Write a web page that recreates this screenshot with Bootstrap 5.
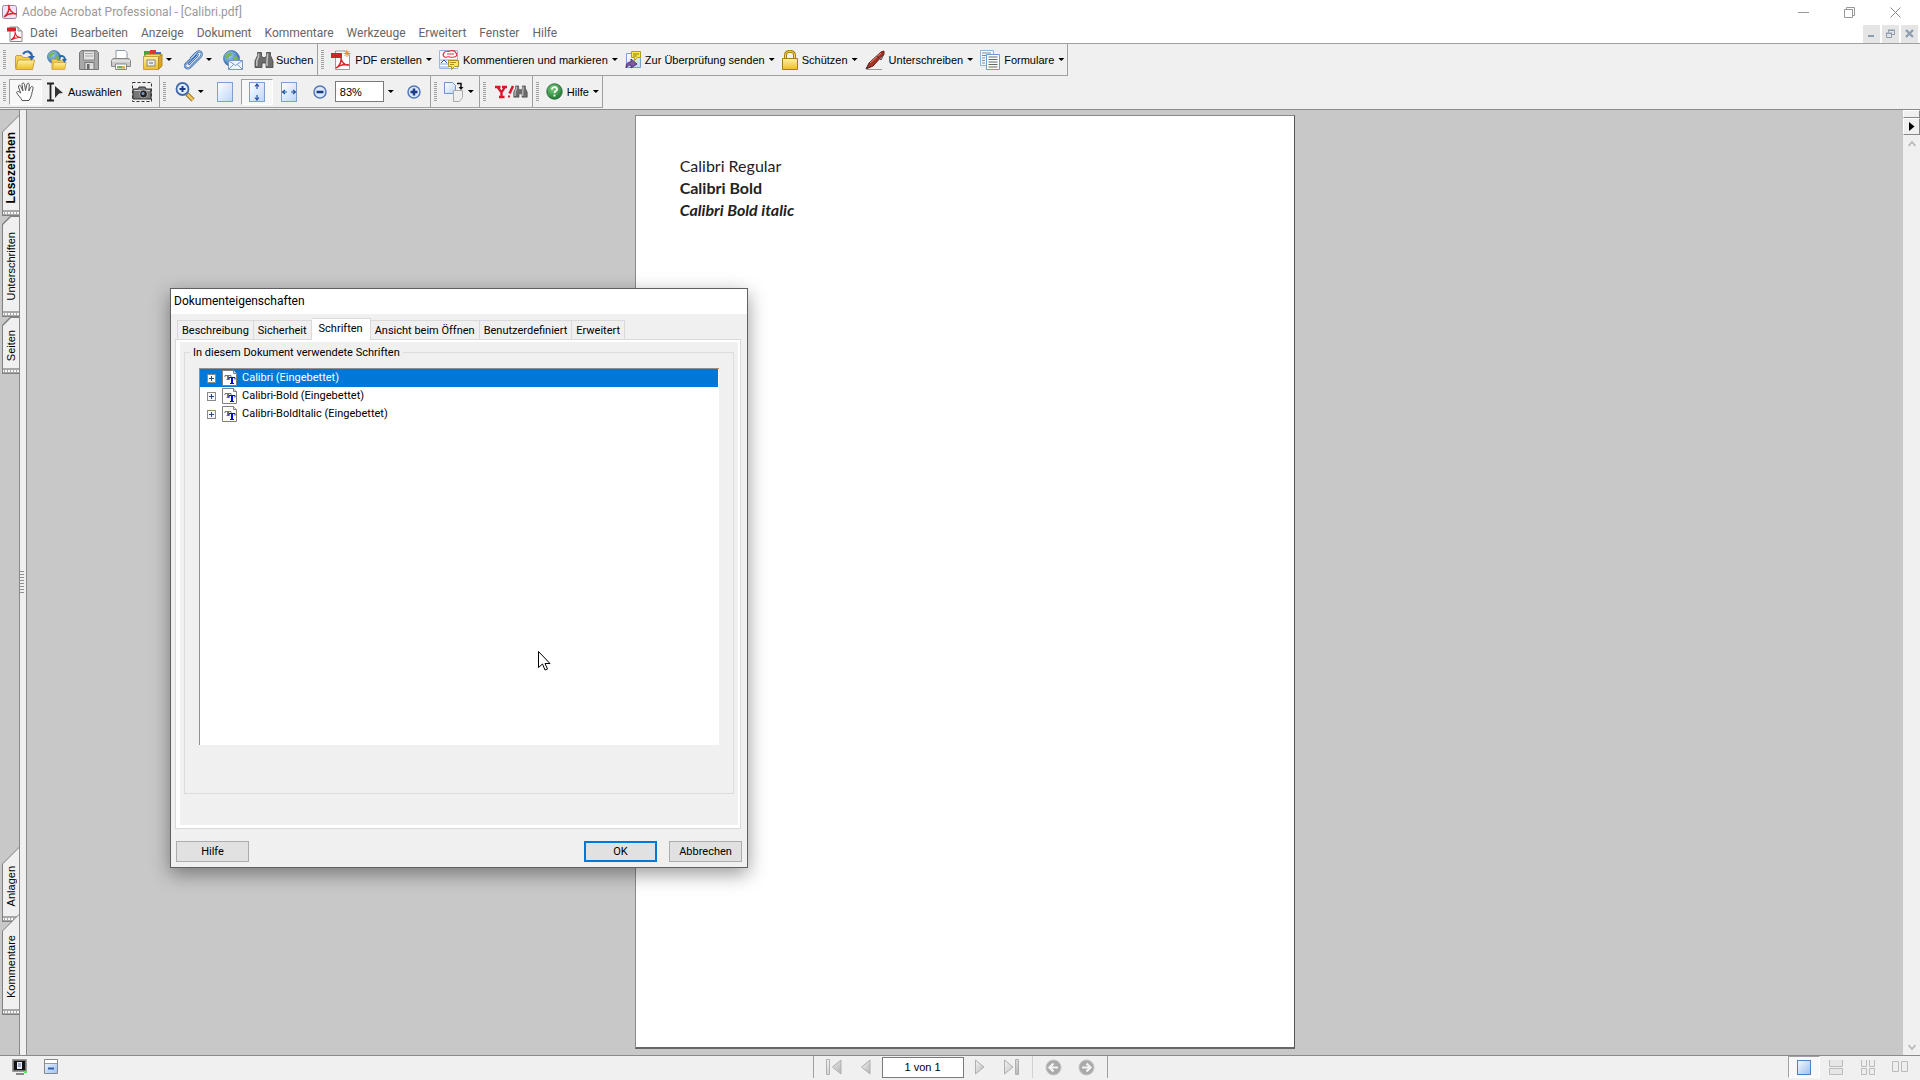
<!DOCTYPE html>
<html lang="de">
<head>
<meta charset="utf-8">
<meta name="viewport" content="width=device-width, initial-scale=1">
<title>Adobe Acrobat Professional - [Calibri.pdf]</title>
<link href="https://cdn.jsdelivr.net/npm/bootstrap@5.3.0/dist/css/bootstrap.min.css" rel="stylesheet">
<style>
:root{--face:#f0f0f0;--line:#a0a0a0;--desk:#c8c8c8}
body{font-family:"Liberation Sans",Arial,sans-serif;font-size:11px;line-height:14px;color:#000;background:var(--face);height:100vh;overflow:hidden;cursor:default}
svg{display:block;flex:none}
button,.menu-link{font:inherit;color:inherit;background:none;border:0;padding:0;text-decoration:none;white-space:nowrap}
.ui-sans{font-family:Roboto,"Open Sans",sans-serif}
.titlebar{height:24px;background:#fff;color:#999;font-size:12px;padding:0 2px}
.win-btn{width:46px;height:22px;display:flex;align-items:center;justify-content:center}
.menubar{height:19px;background:#fff;color:#666;padding:0 2px 0 7px;font-size:12px}
.menu-list{gap:13px;margin-left:7px;padding-bottom:1px}
.mdi-set{gap:2px}
.mdi{width:17px;height:18px;background:#e5e5e5;display:flex;align-items:center;justify-content:center}
.toolbars{border-top:1px solid var(--line);border-bottom:1px solid #8a8a8a;height:67px}
.tool-row{height:32px}
.tool-group{height:32px;border-right:1px solid var(--line);border-bottom:1px solid var(--line);padding-left:3px}
.grip{width:3px;height:20px;background:repeating-linear-gradient(#a0a0a0 0 1px,transparent 1px 2px);margin-right:3px;flex:none}
.tool{display:flex;align-items:center;height:26px;padding:0 6px}
.tool.drop{gap:3px;padding-right:5px}
.tool.wordy{gap:4px;padding:0 3px 0 4px}
.tool.search{gap:2px;padding:0 4px 0 5px}
.tool.fit{padding:0 8px}
.tool.snap{padding:0 7px}
.pressed{background:#f8f8f8;border-top:1px solid #a0a0a0;border-left:1px solid #a0a0a0;border-right:1px solid #fff;border-bottom:1px solid #fff}
.tool.pressed{padding:0 6px}
.tool.fit.pressed{padding:0 7px}
.caret{width:6px;height:3px;background:#000;clip-path:polygon(0 0,100% 0,50% 100%);flex:none}
.field{border:1px solid #7a7a7a;border-radius:0;background:#fff;font-size:11px;line-height:14px;height:21px;outline:0}
.zoom-field{width:49px;padding:0 4px}
.side{width:19px;padding:5px 0 40px 2px;background:var(--desk)}
.side-tab{width:17px;display:flex;position:relative;align-items:center;justify-content:center;background:#808080;clip-path:polygon(17px 0,17px 100%,0 100%,0 17px);padding:4px 0 0}
.side-tab::before{content:"";position:absolute;inset:1px 0 5px 1px;background:var(--face);clip-path:polygon(16px 0,16px 100%,0 100%,0 16px)}
.side-tab::after{content:"";position:absolute;left:1px;right:0;bottom:1px;height:5px;background:radial-gradient(circle at 1px 1px,#f8f8f8 1px,transparent 1px) 2px 2px/3px 8px repeat-x,#a8a8a8}
.side-tab span{position:relative;writing-mode:vertical-rl;transform:rotate(180deg);line-height:14px}
.side-tab.current{font-weight:bold;font-size:12px}
.side-tab.notched{clip-path:polygon(8px 0,17px 0,17px 100%,0 100%,0 8px);padding:0}
.notched::before{clip-path:polygon(8px 0,16px 0,16px 100%,0 100%,0 8px)}
.tab-l{height:101px}.tab-s{height:57px}.tab-a{height:75px}
.overlap{margin-top:-8px}
.splitter{width:8px;background:var(--face);border-left:1px solid #8a8a8a;border-right:1px solid #8a8a8a}
.split-grip{width:4px;height:24px;background:repeating-linear-gradient(#909090 0 1px,transparent 1px 3px)}
.desk{background:var(--desk);padding:5px 0 6px 0}
.sheet{aspect-ratio:660/933;background:#fff;border:1px solid #8a8a8a;border-right-color:#555;border-bottom:2px solid #666;padding:39px 44px;font-family:Lato,Carlito,sans-serif;font-size:16px;line-height:22px;color:#222}
.scroll{width:17px;background:var(--face);color:#b8b8b8}
.scroll-split{height:8px;border:1px solid #fff;border-bottom-color:#888;border-right-color:#888}
.scroll-menu{height:17px;border:1px solid #fff;border-bottom-color:#888;border-right-color:#888;color:#000}
.status{height:25px;border-top:1px solid #8a8a8a;display:grid;grid-template-columns:1fr auto 1fr;align-items:center;padding-bottom:2px}
.status .nav-set{border-left:1px solid var(--line);border-right:1px solid var(--line);height:22px}
.page-field{width:82px;text-align:center}
.view-btn{width:32px;height:22px;display:flex;align-items:center;justify-content:center}
.dialog{position:absolute;left:170px;top:288px;width:578px;background:var(--face);border:1px solid #606060;box-shadow:0 6px 18px rgba(0,0,0,.4);font-size:11px;line-height:14px}
.dialog-title{height:25px;background:#fff;padding:0 0 2px 3px;font-size:12px}
.dlg-tabs{padding:4px 0 0 6px;height:25px;align-items:flex-end}
.dlg-tab{height:19px;border:1px solid #d9d9d9;border-bottom:0;border-left-width:0;padding:1px 4px 0}
.dlg-tab:first-child{border-left-width:1px}
.dlg-tab.sel{height:22px;background:#fff;padding:0 7px 2px;margin-bottom:-1px;position:relative;z-index:1}
.pane{margin:0 6px 0 4px;border:1px solid #d9d9d9;background:#fff;padding:2px 2px 3px 4px}
.pane-in{background:var(--face);padding:4px 4px 31px 4px}
.fonts-box{position:relative;border:1px solid #dcdcdc;margin-top:6px;padding:15px 14px 48px}
.fonts-box legend{position:absolute;top:-7px;left:5px;width:auto;font-size:11px;line-height:14px;background:var(--face);padding:0 3px;margin:0;float:none}
.tree{list-style:none;margin:0;padding:0;background:#fff;border-left:1px solid #909090;border-top:1px solid #909090;height:377px}
.tree li{height:18px;padding-left:7px;display:flex;align-items:center}
.tree li.on{background:#0078d7;color:#fff;margin-right:1px}
.tree li svg:first-child{margin-right:6px}
.tree li svg:nth-child(2){margin-right:5px}
.dlg-foot{padding:12px 5px 5px;gap:12px}
.push{width:73px;height:21px;background:#e1e1e1;border:1px solid #adadad}
.push.ok{border:2px solid #0078d7}
.pointer{position:absolute;left:538px;top:651px;z-index:3}
</style>
</head>
<body class="d-flex flex-column">
<svg width="0" height="0" class="position-absolute" aria-hidden="true">
<defs>
<linearGradient id="gBlue" x1="0" y1="0" x2="1" y2="1"><stop offset="0" stop-color="#fff"/><stop offset="1" stop-color="#bcd6f5"/></linearGradient>
<linearGradient id="gDeep" x1="0" y1="0" x2="1" y2="1"><stop offset="0" stop-color="#f4f9ff"/><stop offset="1" stop-color="#9cc0ee"/></linearGradient>
<linearGradient id="gGold" x1="0" y1="0" x2="0" y2="1"><stop offset="0" stop-color="#fff0a0"/><stop offset="1" stop-color="#eebc2e"/></linearGradient>
<linearGradient id="gGrey" x1="0" y1="0" x2="1" y2="1"><stop offset="0" stop-color="#f6f6f6"/><stop offset="1" stop-color="#b4b4b4"/></linearGradient>
<radialGradient id="gGlobe" cx=".35" cy=".3" r=".8"><stop offset="0" stop-color="#a5d5ff"/><stop offset="1" stop-color="#1d57a3"/></radialGradient>
<radialGradient id="gGreen" cx=".4" cy=".3" r=".7"><stop offset="0" stop-color="#7fd07f"/><stop offset="1" stop-color="#1f7a34"/></radialGradient>
<symbol id="globe" viewBox="0 0 14 14"><circle cx="7" cy="7" r="6.5" fill="url(#gGlobe)" stroke="#3e6ea8" stroke-width=".7"/><path d="M2 4l3-2 3 .5-1 2-2 1-1 2-2-1zM8 6l3-1 2 2-2 4-2-1zM3 9l2 1v2z" fill="#79b557"/></symbol>
<symbol id="folder" viewBox="0 0 20 16"><path d="M.5 14.500V2.500l1-1h5l1.500 2H16.500v2.500" fill="#f3cd55" stroke="#c9a235"/><path d="M.8 15.500L3 6H19.500l-2 9.500z" fill="url(#gGold)" stroke="#c9a235"/></symbol>
<symbol id="bino" viewBox="0 0 20 20"><path d="M3.500 2.500h4v3l1 2h3l1-2v-3h4v3L19 11v6.500h-7V13H8v4.500H1V11l2.500-5.500z" fill="#6c6c6c" stroke="#444" stroke-width=".8"/><path d="M4.500 3.500v3L2.800 11v5M13.500 3.500v3L13 11v5" stroke="#c4c4c4" stroke-width="1.500" fill="none"/></symbol>
<symbol id="acro" viewBox="0 0 16 16"><path d="M3 1h8l4 4v10.500H3z" fill="#fff" stroke="#888"/><path d="M11 1v4h4" fill="#ddd" stroke="#888"/><path d="M0 1.500h9v4H0z" fill="#d8202a"/><path d="M4 14c3-2 4.500-5.500 4-8 0 3 3 6 6 5.500-3-.5-7 .5-10 2.500z" fill="none" stroke="#e0202a" stroke-width="1.200"/></symbol>
<symbol id="ttf" viewBox="0 0 15 16"><path d="M.5.500h11L14.500 3.500v12H.500z" fill="#fff" stroke="#808080"/><path d="M11.500.500v3h3" fill="#ddd" stroke="#808080"/><path d="M3 7V5.500h6V7M4.500 9.500h3" stroke="#777" fill="none"/><path d="M6 5v5" stroke="#777" stroke-width="2"/><path d="M7 9.500V7.500h6v2" stroke="#00f" fill="none"/><path d="M10 7v7" stroke="#00f" stroke-width="2"/><path d="M8 13.500h4" stroke="#00f"/></symbol>
<symbol id="plus" viewBox="0 0 9 9"><rect x=".5" y=".5" width="8" height="8" fill="#f8f8f8" stroke="#8a8a8a"/><path d="M2 4.500h5M4.500 2v5" stroke="#27488e"/></symbol>
<symbol id="sheetico" viewBox="0 0 16 20"><rect x=".5" y=".5" width="15" height="19" fill="url(#gBlue)" stroke="#7a9fd0"/></symbol>
</defs>
</svg>

<header class="ui-sans">
<div class="titlebar d-flex align-items-center">
<svg width="16" height="16" viewBox="0 0 16 16"><rect x=".5" y="1.500" width="14" height="13" rx="2" fill="#eee4f5" stroke="#9b85ac"/><path d="M2 13C6 10 8 5 6.500 1c.5 5 4 9 8 9-4-1-9 0-12.500 3z" fill="none" stroke="#e0202a" stroke-width="1.500"/></svg>
<span class="ms-1">Adobe Acrobat Professional - [Calibri.pdf]</span>
<div class="d-flex ms-auto">
<button class="win-btn" aria-label="Minimieren"><svg width="11" height="11" stroke="#999"><path d="M0 5.500h11"/></svg></button>
<button class="win-btn" aria-label="Verkleinern"><svg width="11" height="11" stroke="#999" fill="none"><path d="M.5 2.500h8v8h-8zM2.500 2.500v-2h8v8h-2"/></svg></button>
<button class="win-btn" aria-label="Schließen"><svg width="11" height="11" stroke="#888" fill="none"><path d="M.5.500l10 10M10.500.500l-10 10"/></svg></button>
</div>
</div>
<nav class="menubar d-flex align-items-center">
<svg width="16" height="16"><use href="#acro"/></svg>
<div class="menu-list d-flex">
<a class="menu-link" href="#">Datei</a><a class="menu-link" href="#">Bearbeiten</a><a class="menu-link" href="#">Anzeige</a><a class="menu-link" href="#">Dokument</a><a class="menu-link" href="#">Kommentare</a><a class="menu-link" href="#">Werkzeuge</a><a class="menu-link" href="#">Erweitert</a><a class="menu-link" href="#">Fenster</a><a class="menu-link" href="#">Hilfe</a>
</div>
<div class="mdi-set d-flex ms-auto">
<button class="mdi" aria-label="Dokument minimieren"><svg width="9" height="9"><path d="M1 7h6" stroke="#8a9cae" stroke-width="2"/></svg></button>
<button class="mdi" aria-label="Dokument verkleinern"><svg width="9" height="9" fill="none" stroke="#8a9cae"><path d="M.5 4.500h5v4h-5zM0 4h6M2.500 3.500V1.500h6v4H6M2 1h7"/></svg></button>
<button class="mdi" aria-label="Dokument schließen"><svg width="9" height="9"><path d="M1 1l7 7M8 1L1 8" stroke="#8a9cae" stroke-width="2.200"/></svg></button>
</div>
</nav>
</header>

<section class="toolbars flex-shrink-0">
<div class="tool-row d-flex">
<div class="tool-group d-flex align-items-center">
<span class="grip"></span>
<button class="tool" aria-label="Öffnen"><svg width="20" height="20"><use href="#folder" y="4" width="20" height="16"/><path d="M8 4c3-4 8-3 9 2" fill="none" stroke="#2f68ad" stroke-width="2.200"/><path d="M13 6h7l-3.500 4.500z" fill="#2f68ad"/></svg></button>
<button class="tool" aria-label="Webseite öffnen"><svg width="20" height="20"><use href="#globe" width="14" height="14"/><use href="#folder" x="4" y="8" width="16" height="12"/><path d="M12 7c3-2 5-1 6 2" fill="none" stroke="#2f68ad" stroke-width="2"/><path d="M15 9h5l-2.500 4z" fill="#2f68ad"/></svg></button>
<button class="tool" aria-label="Speichern"><svg width="20" height="20"><path d="M.5 2.500l2-2h15l2 2v17h-19z" fill="#a8a8a8" stroke="#777"/><rect x="4.500" y="1" width="11" height="9" fill="#e4e4e4" stroke="#888"/><path d="M6 3.500h8M6 6h8" stroke="#aaa"/><rect x="6" y="12.500" width="9" height="7" fill="#ddd" stroke="#777"/><rect x="8" y="14" width="2.500" height="5" fill="#666"/></svg></button>
<button class="tool" aria-label="Drucken"><svg width="20" height="20"><path d="M5 8V.500h9l2 2V8" fill="#fff" stroke="#8899aa"/><path d="M2 8.500h16l1.500 2v6h-19v-6z" fill="#c9c9c9" stroke="#888"/><path d="M1 11h18" stroke="#f4f4f4"/><path d="M4.500 14h11v5.500h-11z" fill="#fff" stroke="#888"/><path d="M6 16h8v2.500H6z" fill="#7cae58"/><path d="M11 16h3v2.500h-3z" fill="#e5b33c"/></svg></button>
<button class="tool drop" aria-label="Organizer"><svg width="20" height="20"><path d="M1 1h6v5H1z" fill="#3aa83a"/><path d="M7 0h6v5H7z" fill="#e0352d"/><path d="M12 2h6v4h-6z" fill="#3772d0"/><path d="M.5 6.500l3-2H18.500l-2 3z" fill="#f8dd70" stroke="#c9a235"/><path d="M.5 6.500h15v13H.500z" fill="url(#gGold)" stroke="#c9a235"/><path d="M15.500 7l3.500-3v12l-3.500 3.500z" fill="#d9a528" stroke="#b38b20"/><rect x="4" y="10" width="8" height="6" fill="#eee" stroke="#888"/><path d="M6 13h4" stroke="#666"/></svg><span class="caret"></span></button>
<button class="tool drop" aria-label="Anhang"><svg width="20" height="20" fill="none"><path d="M6 14l8-8c1.500-1.500 0-3-1.500-1.500L3 13.500c-3 3 1 6.500 4 4L17.500 7c3.500-4-1-7.500-4.500-4L8 8" stroke="#3a69a8" stroke-width="2.200" stroke-linecap="round"/><path d="M6 14l8-8c1.500-1.500 0-3-1.500-1.500L3 13.500c-3 3 1 6.500 4 4L17.500 7c3.500-4-1-7.500-4.500-4L8 8" stroke="#b5d2f4" stroke-width=".9" stroke-linecap="round"/></svg><span class="caret"></span></button>
<button class="tool" aria-label="E-Mail"><svg width="20" height="20"><use href="#globe" width="17" height="17"/><path d="M5.500 10.500h14v9h-14z" fill="#eef5ff" stroke="#7799c5"/><path d="M5.500 10.500l7 5 7-5M5.500 19.500l5-5M19.500 19.500l-5-5" fill="none" stroke="#7799c5"/></svg></button>
<button class="tool search"><svg width="20" height="20"><use href="#bino" width="20" height="20"/></svg>Suchen</button>
</div>
<div class="tool-group d-flex align-items-center">
<span class="grip"></span>
<button class="tool wordy"><svg width="20" height="20"><path d="M4.500 1h10l4 4v14.500h-14z" fill="#fff" stroke="#999"/><path d="M0 3h11v5H0z" fill="#d8202a"/><path d="M5 18c4-2 5.500-7 5-10 .5 4 4 8 8 7-4-1-9 0-13 3z" fill="none" stroke="#e0202a" stroke-width="1.400"/><path d="M16 0v7M12.500 3.500h7M13.500 1l5 5M18.500 1l-5 5" stroke="#f08a24"/></svg>PDF erstellen<span class="caret"></span></button>
<button class="tool wordy"><svg width="20" height="20"><path d="M.5.500h18v18H.500z" fill="#fff" stroke="#9ab8dd"/><path d="M1 10h17M1 14h10M1 17h9" stroke="#7aa3d8"/><path d="M5 3c1-3 5-1 6-2 3-1 5 0 6 2 2 2 0 4-2 4-3 1-5-1-7 0-3 1-5-2-3-4zM8 4h7" fill="#fff" stroke="#e0303a" stroke-width="1.200"/><path d="M2 13l3-3 3 3" fill="none" stroke="#2f4fae"/><path d="M9.500 10.500h10v6h-4l-3 3v-3h-3z" fill="#ffea5a" stroke="#a98f1e"/><path d="M11 12.500h6M11 14.500h4" stroke="#a98f1e"/></svg>Kommentieren und markieren<span class="caret"></span></button>
<button class="tool wordy"><svg width="16" height="18"><path d="M1.500 2.500h14v14h-14z" fill="url(#gBlue)" stroke="#7a9fd0"/><path d="M6.500.500h9v6h-3l-3 3v-3h-3z" fill="#ffe64a" stroke="#b39a20"/><path d="M8 3h6M8 5h4" stroke="#8c7a18"/><path d="M1 17c0-5 2-6 5-6V8l6 5-6 4v-3c-2 0-3 1-5 3z" fill="#7c59a8" stroke="#4e3279"/></svg>Zur Überprüfung senden<span class="caret"></span></button>
<button class="tool wordy"><svg width="16" height="20"><path d="M3.500 10V5c0-5 9-5 9 0v5" fill="none" stroke="#a87e10" stroke-width="3"/><path d="M3.500 10V5c0-5 9-5 9 0v5" fill="none" stroke="#f7d95c" stroke-width="1"/><path d="M.5 8.500h15v11H.500z" fill="url(#gGold)" stroke="#a87e10"/></svg>Schützen<span class="caret"></span></button>
<button class="tool wordy"><svg width="20" height="20"><path d="M2 19.500h15" stroke="#999"/><path d="M1 19l3-6L16 2l3-1 0 3L8 16z" fill="#a83224" stroke="#5e1c12"/><path d="M5 13L16 3" stroke="#e89080"/><path d="M12 6l4 4 3-6M1 19l3-4" stroke="#444" fill="none"/></svg>Unterschreiben<span class="caret"></span></button>
<button class="tool wordy"><svg width="20" height="20"><path d="M.5.500h13v15H.500z" fill="#f3f8ff" stroke="#8fb4e0"/><path d="M2 3h9M2 5.500h9M2 8h3M2 10.500h3M2 13h3" stroke="#888"/><path d="M6.500 4.500h13v15h-13z" fill="#fff" stroke="#6f9ad0"/><path d="M8.500 7h9M8.500 9.500h9M8.500 12h9M8.500 14.500h9M8.500 17h9" stroke="#666"/></svg>Formulare<span class="caret"></span></button>
</div>
</div>
<div class="tool-row d-flex">
<div class="tool-group d-flex align-items-center">
<span class="grip"></span>
<button class="tool pressed" aria-label="Hand"><svg width="19" height="20"><path d="M6 18.500c-1-3-5-6-5.300-8 0-1.500 2-1.300 4 .5L2.500 5c-.5-2 1.500-2.500 2.200-.8L7 9 6 2.500c0-2 2-2 2.500-.3L9.500 8.500 11 2.300c.5-1.800 2.500-1.300 2.300.5L12.800 9l2-3.800c1-1.500 2.700-.7 2.200 1-1 4-1.500 9-4 12.300z" fill="#fff" stroke="#555"/></svg></button>
<button class="tool wordy"><svg width="18" height="20"><path d="M1 1.500h7M1 18.500h7M4.500 1.500v17" stroke="#222" stroke-width="1.800"/><path d="M9 4l8 7-4 .5-4 4.500z" fill="#333"/></svg>Auswählen</button>
<button class="tool snap" aria-label="Schnappschuss"><svg width="20" height="20"><rect x=".5" y=".5" width="19" height="19" fill="none" stroke="#333" stroke-dasharray="3 2"/><path d="M1 7h5l1-2h6l1 2h5v10H1z" fill="#777" stroke="#333"/><path d="M2 8.500h16" stroke="#ccc"/><circle cx="11.500" cy="12" r="4" fill="#222" stroke="#aaa"/><circle cx="11" cy="11.500" r="1.500" fill="#7799cc"/></svg></button>
</div>
<div class="tool-group d-flex align-items-center">
<span class="grip"></span>
<button class="tool drop" aria-label="Vergrößern"><svg width="20" height="20"><path d="M12 12l6 6" stroke="#8f6a1a" stroke-width="4.500"/><path d="M12.500 12.500l5.500 5.500" stroke="#f0c95a" stroke-width="2.500"/><circle cx="7.500" cy="7" r="6" fill="#e5f0ff" stroke="#4169ae" stroke-width="1.800"/><path d="M4.500 7h6M7.500 4v6" stroke="#1c3b86" stroke-width="2"/></svg><span class="caret"></span></button>
<button class="tool fit" aria-label="Originalgröße"><svg width="16" height="20"><use href="#sheetico"/></svg></button>
<button class="tool fit pressed" aria-label="Ganze Seite"><svg width="16" height="20"><use href="#sheetico"/><path d="M8 2v5M8 13v5M6 4.500L8 2l2 2.500M6 15.500L8 18l2-2.500" stroke="#24529a" fill="none" stroke-width="1.200"/></svg></button>
<button class="tool fit" aria-label="Seitenbreite"><svg width="16" height="20"><use href="#sheetico"/><path d="M1.500 10H6M10 10h4.500M4 8L1.500 10 4 12M12 8l2.500 2-2.500 2" stroke="#24529a" fill="none" stroke-width="1.200"/></svg></button>
<button class="tool" aria-label="Verkleinern"><svg width="18" height="16"><circle cx="9" cy="8" r="6" fill="#dce9fa" stroke="#5578b5" stroke-width="1.500"/><path d="M5.500 8h7" stroke="#1c3b86" stroke-width="2.500"/></svg></button>
<input class="field zoom-field" value="83%" aria-label="Zoomfaktor">
<button class="tool px-1" aria-label="Zoomstufen"><span class="caret"></span></button>
<button class="tool fit" aria-label="Vergrößern"><svg width="16" height="16"><circle cx="8" cy="8" r="6" fill="#dce9fa" stroke="#5578b5" stroke-width="1.500"/><path d="M4.500 8h7M8 4.500v7" stroke="#1c3b86" stroke-width="2.500"/></svg></button>
</div>
<div class="tool-group d-flex align-items-center">
<span class="grip"></span>
<button class="tool drop ps-1" aria-label="Seite drehen"><svg width="21" height="20"><path d="M.5.500h8l3 3v8H.500z" fill="url(#gBlue)" stroke="#6f93c8"/><path d="M9.500 8.500h9v7l-3 4h-6z" fill="#eee" stroke="#aaa"/><path d="M13 1.500h4v4" fill="none" stroke="#111" stroke-width="1.500"/><path d="M14.500 5h5L17 8z" fill="#111"/></svg><span class="caret"></span></button>
</div>
<div class="tool-group d-flex align-items-center">
<span class="grip"></span>
<button class="tool pe-1" aria-label="Yahoo Suche"><svg width="33" height="14"><path d="M0 2h5.500M7 2h5M2.500 2l4 5.500L10 2M6.500 7v5M4 12h5.500" stroke="#e3102a" stroke-width="2.300" fill="none"/><path d="M14.500 8.500L18 1" stroke="#e3102a" stroke-width="2.500"/><path d="M13 11.500h2" stroke="#e3102a" stroke-width="2.200"/><use href="#bino" x="18" y="-1" width="15" height="15"/></svg></button>
</div>
<div class="tool-group d-flex align-items-center">
<span class="grip"></span>
<button class="tool wordy"><svg width="17" height="17"><circle cx="8.500" cy="8.500" r="7.700" fill="url(#gGreen)" stroke="#2b6e38"/><path d="M6 6.500c0-3.500 5.500-3 5 0-.3 1.500-2.500 1.500-2.500 3.500M8.500 11.500v2" stroke="#fff" stroke-width="1.800" fill="none"/></svg>Hilfe<span class="caret"></span></button>
</div>
</div>
</section>

<main class="d-flex flex-grow-1">
<aside class="side d-flex flex-column">
<button class="side-tab tab-l current"><span>Lesezeichen</span></button>
<button class="side-tab notched tab-l"><span>Unterschriften</span></button>
<button class="side-tab notched tab-s"><span>Seiten</span></button>
<button class="side-tab tab-a mt-auto"><span>Anlagen</span></button>
<button class="side-tab tab-l overlap"><span>Kommentare</span></button>
</aside>
<div class="splitter d-flex align-items-center"><span class="split-grip"></span></div>
<section class="desk flex-grow-1 d-flex justify-content-center">
<article class="sheet">
<div>Calibri Regular</div>
<div class="fw-bold">Calibri Bold</div>
<div class="fw-bold fst-italic">Calibri Bold italic</div>
</article>
</section>
<div class="scroll d-flex flex-column">
<div class="scroll-split"></div>
<button class="scroll-menu d-flex align-items-center justify-content-center" aria-label="Menü"><svg width="6" height="9"><path d="M0 0l5.500 4.500L0 9z"/></svg></button>
<svg class="mx-auto mt-1" width="8" height="8" fill="none" stroke="currentColor" stroke-width="1.800"><path d="M.5 7L4 3l3.500 4"/></svg>
<svg class="mx-auto mt-auto mb-1" width="8" height="8" fill="none" stroke="currentColor" stroke-width="1.800"><path d="M.5 2L4 6l3.500-4"/></svg>
</div>
</main>

<footer class="status flex-shrink-0">
<div class="d-flex align-items-center gap-3 ps-2 ms-1">
<button aria-label="Vollbild"><svg width="16" height="16"><path d="M.5.500h14v12H.500z" fill="#777" stroke="#999"/><path d="M2 2h11v9H2z" fill="#111"/><path d="M5 3h5v7H5z" fill="#e4eefc"/><path d="M6 5h3M6 7h3" stroke="#668"/><path d="M4 15h8" stroke="#888" stroke-width="2"/><path d="M12 12h3v2h-3z" fill="#4cf04c"/></svg></button>
<button aria-label="Werkzeugleisten ausblenden"><svg width="15" height="16"><path d="M.5.500h13v14H.500z" fill="url(#gDeep)" stroke="#888"/><path d="M1 1h12v3H1z" fill="#fff"/><path d="M1 4.500h12" stroke="#999"/><path d="M4 9.500h6" stroke="#315fae" stroke-width="2"/></svg></button>
</div>
<div class="nav-set d-flex align-items-center">
<button class="px-2 ms-1" aria-label="Erste Seite"><svg width="16" height="16" fill="url(#gGrey)" stroke="#b0b0b0"><path d="M.5.500h3v15h-3zM15 1v14L6.500 8z"/></svg></button>
<button class="px-2" aria-label="Vorherige Seite"><svg width="16" height="16" fill="url(#gGrey)" stroke="#b0b0b0"><path d="M12 1v14L3.500 8z"/></svg></button>
<input class="field page-field" value="1 von 1" aria-label="Seite">
<button class="px-2" aria-label="Nächste Seite"><svg width="16" height="16" fill="url(#gGrey)" stroke="#b0b0b0"><path d="M3.500 1v14L12 8z"/></svg></button>
<button class="px-2" aria-label="Letzte Seite"><svg width="16" height="16" fill="url(#gGrey)" stroke="#b0b0b0"><path d="M11.500.500h3v15h-3zM.500 1v14L9 8z"/></svg></button>
<div class="vr ms-1 text-secondary"></div>
<button class="px-2 ms-1" aria-label="Zurück"><svg width="17" height="17"><circle cx="8.500" cy="8.500" r="7.500" fill="#aaa" stroke="#c4c4c4"/><path d="M13 8.500H5M8.500 4.500l-4 4 4 4" stroke="#f4f4f4" stroke-width="2.200" fill="none"/></svg></button>
<button class="px-2 me-1" aria-label="Vor"><svg width="17" height="17"><circle cx="8.500" cy="8.500" r="7.500" fill="#aaa" stroke="#c4c4c4"/><path d="M4 8.500h8M8.500 4.500l4 4-4 4" stroke="#f4f4f4" stroke-width="2.200" fill="none"/></svg></button>
</div>
<div class="d-flex align-items-center justify-content-end pe-1">
<button class="view-btn pressed" aria-label="Einzelne Seite"><svg width="14" height="15"><rect x=".5" y=".5" width="13" height="14" fill="url(#gDeep)" stroke="#4f7fc4"/></svg></button>
<button class="view-btn" aria-label="Fortlaufend"><svg width="14" height="15" fill="#e6e6e6" stroke="#bbb"><path d="M.5 0v6.500h13V0M.500 8.500h13v6H.500z"/></svg></button>
<button class="view-btn" aria-label="Fortlaufend, Doppelseiten"><svg width="14" height="15" fill="#eee" stroke="#bbb"><path d="M.5 0v6.500h5V0M8.500 0v6.500h5V0M.500 8.500h5v6h-5zM8.500 8.500h5v6h-5z"/></svg></button>
<button class="view-btn" aria-label="Doppelseiten"><svg width="16" height="13" fill="#eee" stroke="#bbb"><path d="M.5.500h6v10h-6zM9.500.500h6v10h-6z"/></svg></button>
</div>
</footer>

<section class="dialog ui-sans" role="dialog" aria-labelledby="dlgTitle">
<div class="dialog-title d-flex align-items-center" id="dlgTitle">Dokumenteigenschaften</div>
<div class="dlg-tabs d-flex">
<button class="dlg-tab">Beschreibung</button><button class="dlg-tab">Sicherheit</button><button class="dlg-tab sel">Schriften</button><button class="dlg-tab">Ansicht beim Öffnen</button><button class="dlg-tab">Benutzerdefiniert</button><button class="dlg-tab">Erweitert</button>
</div>
<div class="pane"><div class="pane-in">
<fieldset class="fonts-box">
<legend>In diesem Dokument verwendete Schriften</legend>
<ul class="tree">
<li class="on"><svg width="9" height="9"><use href="#plus"/></svg><svg width="15" height="16"><use href="#ttf"/></svg>Calibri (Eingebettet)</li>
<li><svg width="9" height="9"><use href="#plus"/></svg><svg width="15" height="16"><use href="#ttf"/></svg>Calibri-Bold (Eingebettet)</li>
<li><svg width="9" height="9"><use href="#plus"/></svg><svg width="15" height="16"><use href="#ttf"/></svg>Calibri-BoldItalic (Eingebettet)</li>
</ul>
</fieldset>
</div></div>
<div class="dlg-foot d-flex">
<button class="push me-auto">Hilfe</button>
<button class="push ok">OK</button>
<button class="push">Abbrechen</button>
</div>
</section>
<svg class="pointer" width="13" height="20"><path d="M.5.500v16l4-3.500 2.500 6 2.500-1-2.500-5.500h5z" fill="#fff" stroke="#000"/></svg>
<script src="https://cdn.jsdelivr.net/npm/bootstrap@5.3.0/dist/js/bootstrap.bundle.min.js"></script>
</body>
</html>
